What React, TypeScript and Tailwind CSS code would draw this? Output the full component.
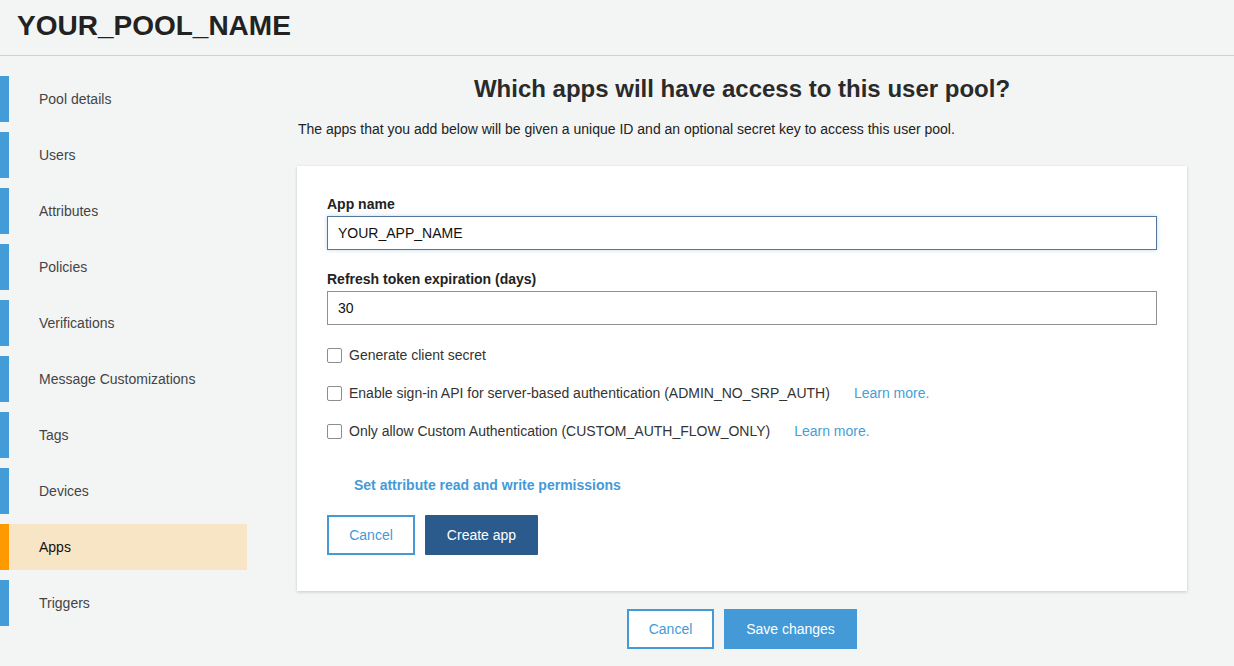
const navItems = [
  "Pool details",
  "Users",
  "Attributes",
  "Policies",
  "Verifications",
  "Message Customizations",
  "Tags",
  "Devices",
  "Apps",
  "Triggers",
];

const options = [
  { label: "Generate client secret", link: false },
  { label: "Enable sign-in API for server-based authentication (ADMIN_NO_SRP_AUTH)", link: true },
  { label: "Only allow Custom Authentication (CUSTOM_AUTH_FLOW_ONLY)", link: true },
];

export default function App() {
  return (
    <div className="min-h-[666px] bg-[#f3f5f5] text-[#333] font-['Liberation_Sans',Arial,sans-serif]">
      {/* Header */}
      <header className="h-[56px] border-b border-[#cfd2d2] pl-[17px] flex items-center">
        <h1 className="text-[28px] font-bold leading-none text-[#222] -mt-[3px]">YOUR_POOL_NAME</h1>
      </header>

      <div className="flex">
        {/* Sidebar */}
        <nav className="w-[247px] shrink-0 pt-[20px] flex flex-col gap-[10px]">
          {navItems.map((item) => {
            const active = item === "Apps";
            return (
              <div
                key={item}
                className={`h-[46px] flex items-center ${active ? "bg-[#f8e5c6] text-[#111]" : "text-[#444]"}`}
              >
                <div className={`w-[9px] h-full ${active ? "bg-[#ff9900]" : "bg-[#439bd7]"}`} />
                <span className="ml-[30px] text-[14px]">{item}</span>
              </div>
            );
          })}
        </nav>

        {/* Main */}
        <main className="ml-[50px] w-[890px] pt-[20px]">
          <h2 className="text-center text-[24px] font-bold text-[#2a2a2a] leading-[26px]">
            Which apps will have access to this user pool?
          </h2>
          <p className="mt-[19px] ml-px text-[14px] text-[#222] leading-[16px]">
            The apps that you add below will be given a unique ID and an optional secret key to access this user pool.
          </p>

          <div className="mt-[29px] bg-white shadow-[0_1px_3px_rgba(0,0,0,0.18)] px-[30px] pt-[30px] pb-[36px]">
            <label className="block text-[14px] font-bold text-[#222] leading-[16px]">App name</label>
            <input
              readOnly
              value="YOUR_APP_NAME"
              className="mt-[4px] w-full h-[34px] px-[10px] text-[14px] text-[#111] border border-[#55779a] shadow-[0_0_4px_rgba(70,140,210,0.35)] outline-none"
            />

            <label className="block mt-[21px] text-[14px] font-bold text-[#222] leading-[16px]">
              Refresh token expiration (days)
            </label>
            <input
              readOnly
              value="30"
              className="mt-[4px] w-full h-[34px] px-[10px] text-[14px] text-[#111] border border-[#8d9296] outline-none"
            />

            <div className="mt-[22px] flex flex-col gap-[21px]">
              {options.map((opt) => (
                <div key={opt.label} className="flex items-center h-[17px] text-[14px] text-[#333]">
                  <span className="w-[15px] h-[15px] border border-[#8a8e92] rounded-[2px] bg-white" />
                  <span className="ml-[7px]">{opt.label}</span>
                  {opt.link && <span className="ml-[24px] text-[#449fd9]">Learn more.</span>}
                </div>
              ))}
            </div>

            <div className="mt-[37px] ml-[27px] text-[14px] font-bold text-[#449ad6] leading-[16px]">
              Set attribute read and write permissions
            </div>

            <div className="mt-[22px] flex gap-[10px]">
              <button className="w-[88px] h-[40px] border-2 border-[#449ad6] bg-white text-[#449ad6] text-[14px]">
                Cancel
              </button>
              <button className="w-[113px] h-[40px] bg-[#2b5b8c] text-white text-[14px] rounded-[1px]">
                Create app
              </button>
            </div>
          </div>

          <div className="mt-[18px] flex justify-center gap-[10px]">
            <button className="w-[87px] h-[40px] border-2 border-[#449ad6] bg-white text-[#449ad6] text-[14px]">
              Cancel
            </button>
            <button className="w-[133px] h-[40px] bg-[#449ad6] text-white text-[14px]">Save changes</button>
          </div>
        </main>
      </div>
    </div>
  );
}
